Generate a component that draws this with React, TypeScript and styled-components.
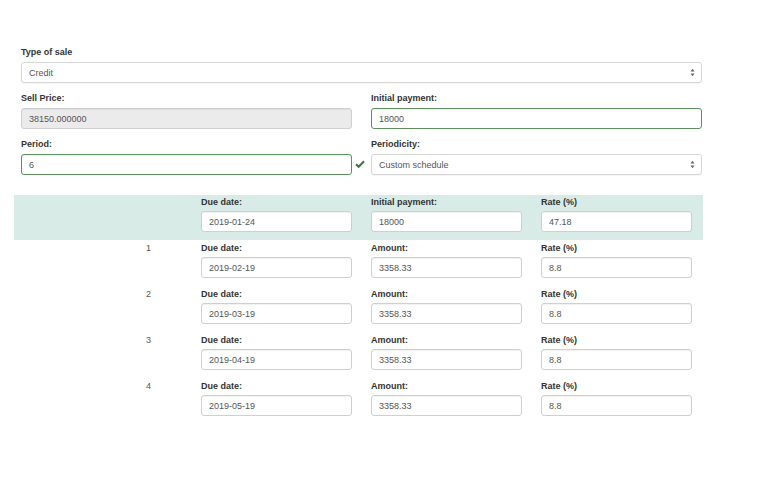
import styled, { createGlobalStyle } from "styled-components";

const GlobalStyle = createGlobalStyle`
  body {
    margin: 0;
    background: #fff;
    font-family: "Liberation Sans", Arial, sans-serif;
    color: #333;
  }
`;

const Page = styled.div`
  width: 681px;
  padding: 46px 0 0 21px;
`;

const FieldRow = styled.div`
  display: grid;
  grid-template-columns: 1fr 1fr;
  column-gap: 19px;
`;

const Field = styled.div`
  position: relative;
  margin-bottom: 9px;
`;

const Label = styled.label<{ $gap?: number }>`
  display: block;
  font-size: 9px;
  font-weight: bold;
  line-height: 12px;
  color: #333;
  margin-bottom: ${(p) => p.$gap ?? 4}px;
`;

const TextInput = styled.input<{ $tone?: "success" | "disabled" }>`
  display: block;
  box-sizing: border-box;
  width: 100%;
  height: 21px;
  padding: 0 7px;
  font-family: inherit;
  font-size: 9px;
  color: #555;
  border: 1px solid
    ${(p) => (p.$tone === "success" ? "#5f8f5f" : "#cfcfcf")};
  border-radius: 3px;
  background: ${(p) => (p.$tone === "disabled" ? "#ebebeb" : "#fff")};
  box-shadow: inset 0 1px 1px rgba(0, 0, 0, 0.06);
  outline: none;
`;

const SelectBox = styled.div`
  display: flex;
  align-items: center;
  justify-content: space-between;
  box-sizing: border-box;
  height: 21px;
  padding: 0 6px 0 7px;
  font-size: 9px;
  color: #555;
  border: 1px solid #d6d6d6;
  border-radius: 3px;
  background: #fff;
  box-shadow: 0 1px 1px rgba(0, 0, 0, 0.04);
`;

const CheckMark = styled.svg`
  position: absolute;
  right: -13px;
  bottom: 7px;
`;

const Schedule = styled.div`
  margin: 11px 0 0 -7px;
  width: 689px;
`;

const ScheduleRow = styled.div<{ $highlight?: boolean }>`
  display: grid;
  grid-template-columns: 168px 151px 151px 151px;
  column-gap: 19px;
  padding: 1px 11px 8px 0;
  margin-bottom: 1px;
  background: ${(p) => (p.$highlight ? "#d9ebe7" : "transparent")};
`;

const RowNumber = styled.div`
  padding-left: 132px;
  font-size: 9px;
  line-height: 12px;
  color: #555;
`;

const ScheduleCell = styled.div``;

const Arrows = () => (
  <svg width="5" height="9" viewBox="0 0 5 9">
    <path d="M0.5 3.5 L2.5 0.8 L4.5 3.5 Z" fill="#666" />
    <path d="M0.5 5.5 L2.5 8.2 L4.5 5.5 Z" fill="#666" />
  </svg>
);

type Installment = {
  num?: string;
  date: string;
  amountLabel: string;
  amount: string;
  rate: string;
};

const rows: Installment[] = [
  { date: "2019-01-24", amountLabel: "Initial payment:", amount: "18000", rate: "47.18" },
  { num: "1", date: "2019-02-19", amountLabel: "Amount:", amount: "3358.33", rate: "8.8" },
  { num: "2", date: "2019-03-19", amountLabel: "Amount:", amount: "3358.33", rate: "8.8" },
  { num: "3", date: "2019-04-19", amountLabel: "Amount:", amount: "3358.33", rate: "8.8" },
  { num: "4", date: "2019-05-19", amountLabel: "Amount:", amount: "3358.33", rate: "8.8" },
];

export default function App() {
  return (
    <>
      <GlobalStyle />
      <Page>
        <Field>
          <Label>Type of sale</Label>
          <SelectBox>
            <span>Credit</span>
            <Arrows />
          </SelectBox>
        </Field>
        <FieldRow>
          <Field>
            <Label>Sell Price:</Label>
            <TextInput $tone="disabled" readOnly value="38150.000000" />
          </Field>
          <Field>
            <Label>Initial payment:</Label>
            <TextInput $tone="success" readOnly value="18000" />
          </Field>
        </FieldRow>
        <FieldRow>
          <Field>
            <Label>Period:</Label>
            <TextInput $tone="success" readOnly value="6" />
            <CheckMark width="10" height="8" viewBox="0 0 10 8">
              <path
                d="M1 4.2 L3.7 6.8 L9 1.2"
                fill="none"
                stroke="#3c763d"
                strokeWidth="2"
              />
            </CheckMark>
          </Field>
          <Field>
            <Label>Periodicity:</Label>
            <SelectBox>
              <span>Custom schedule</span>
              <Arrows />
            </SelectBox>
          </Field>
        </FieldRow>
        <Schedule>
          {rows.map((r, i) => (
            <ScheduleRow key={i} $highlight={i === 0}>
              <RowNumber>{r.num}</RowNumber>
              <ScheduleCell>
                <Label $gap={3}>Due date:</Label>
                <TextInput readOnly value={r.date} />
              </ScheduleCell>
              <ScheduleCell>
                <Label $gap={3}>{r.amountLabel}</Label>
                <TextInput readOnly value={r.amount} />
              </ScheduleCell>
              <ScheduleCell>
                <Label $gap={3}>Rate (%)</Label>
                <TextInput readOnly value={r.rate} />
              </ScheduleCell>
            </ScheduleRow>
          ))}
        </Schedule>
      </Page>
    </>
  );
}
